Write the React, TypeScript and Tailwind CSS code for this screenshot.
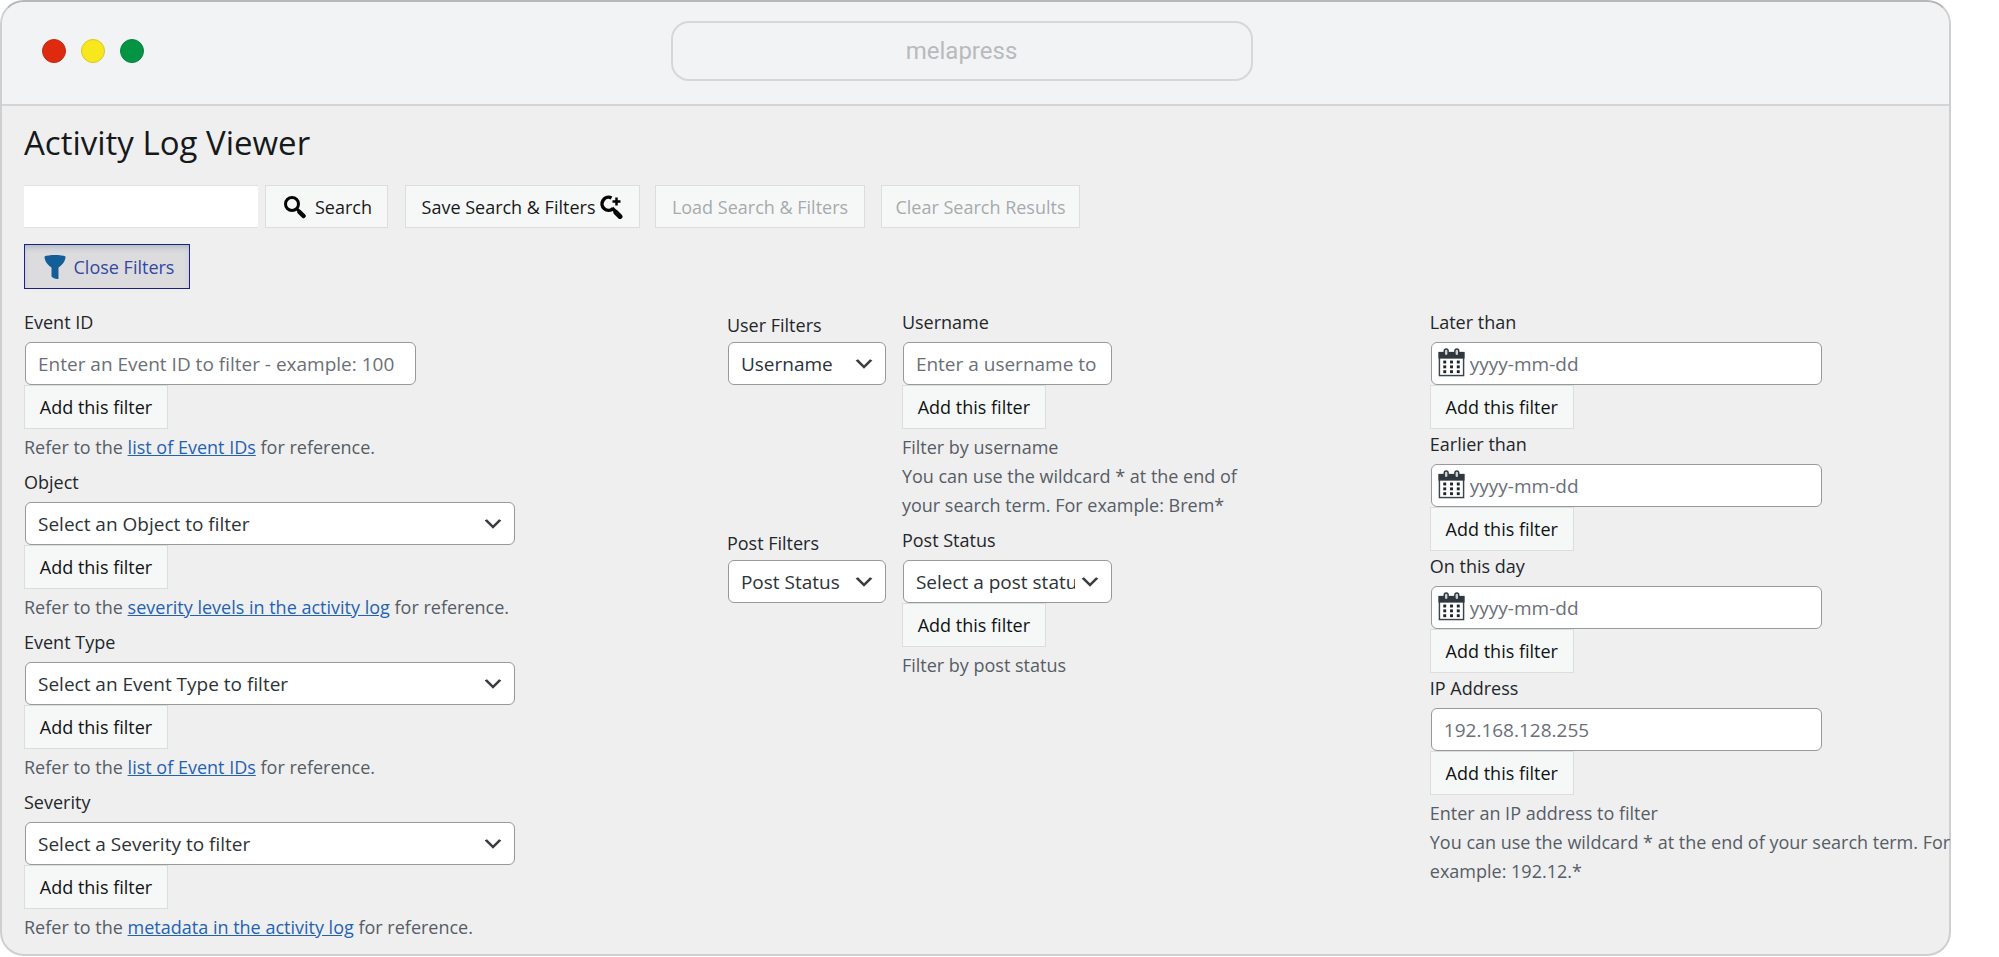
import type { ReactNode } from "react";

const controlClass =
  "h-[43px] rounded-md border border-[#96999e] bg-white px-3 text-[19px] text-[#2c3338] placeholder:text-[#6b7078] placeholder:opacity-100";

const buttonClass =
  "flex items-center whitespace-nowrap border border-[#dcdede] bg-[#f6f8f8] text-lg";

function Chevron() {
  return (
    <svg viewBox="0 0 20 20" className="pointer-events-none absolute right-2.5 top-2.5 h-6 w-6" fill="#3a3e42">
      <path d="M5 6l5 5 5-5 2 1-7 7-7-7z" />
    </svg>
  );
}

function SelectBox({ id, option, className }: { id: string; option: string; className: string }) {
  return (
    <div className={`relative ${className}`}>
      <select id={id} className={`${controlClass} block w-full appearance-none pr-9 pt-0.5`}>
        <option>{option}</option>
      </select>
      <Chevron />
    </div>
  );
}

function AddButton() {
  return (
    <button type="button" className={`${buttonClass} -ml-px h-11 w-36 justify-center text-[#101214]`}>
      Add this filter
    </button>
  );
}

function Label({ id, children }: { id: string; children: ReactNode }) {
  return (
    <label htmlFor={id} className="-ml-px mb-1.5 block text-lg leading-7 text-[#23272b]">
      {children}
    </label>
  );
}

function GroupLabel({ id, children }: { id: string; children: ReactNode }) {
  return (
    <label htmlFor={id} className="-ml-px mb-[3px] mt-[3px] block text-lg leading-7 text-[#23272b]">
      {children}
    </label>
  );
}

function Help({ children }: { children: ReactNode }) {
  return <p className="-ml-px -mr-2 mt-1 text-lg leading-[29px] text-[#565d66]">{children}</p>;
}

function Reference({ link }: { link: string }) {
  return (
    <Help>
      Refer to the{" "}
      <a href="#" className="text-[#1f63b5] underline">
        {link}
      </a>{" "}
      for reference.
    </Help>
  );
}

function CalendarIcon() {
  return (
    <svg viewBox="0 0 27 30" className="pointer-events-none absolute left-[7px] top-1.5 h-[29px] w-[27px]">
      <rect x="1" y="5" width="25" height="23.500" fill="#fff" stroke="#3c444b" strokeWidth="1.500" />
      <rect x="0" y="4" width="27" height="7" fill="#2f383f" />
      <rect x="6" y="1" width="4" height="7" rx="2" fill="#c9cdd0" stroke="#2f383f" strokeWidth="1.500" />
      <rect x="17" y="1" width="4" height="7" rx="2" fill="#c9cdd0" stroke="#2f383f" strokeWidth="1.500" />
      {[13, 18, 23].map((y) =>
        [5, 12, 19].map((x) => <rect key={`${x}-${y}`} x={x} y={y} width="3" height="3" fill="#1d2328" />),
      )}
    </svg>
  );
}

function DateFilter({ id, label }: { id: string; label: string }) {
  return (
    <div>
      <Label id={id}>{label}</Label>
      <div className="relative w-[391px]">
        <input id={id} type="text" placeholder="yyyy-mm-dd" className={`${controlClass} block w-full pl-[38px]`} />
        <CalendarIcon />
      </div>
      <AddButton />
    </div>
  );
}

const selectFilters = [
  { id: "object", label: "Object", option: "Select an Object to filter", link: "severity levels in the activity log" },
  { id: "event-type", label: "Event Type", option: "Select an Event Type to filter", link: "list of Event IDs" },
  { id: "severity", label: "Severity", option: "Select a Severity to filter", link: "metadata in the activity log" },
];

export default function App() {
  return (
    <div className="bg-white font-['Open_Sans','Noto_Sans',sans-serif]">
      <div className="mr-12 rounded-3xl border-2 border-[#cfcfcf] border-t-[#b7b7b7] bg-[#efefef]">
        <header className="relative flex h-[104px] items-center justify-center rounded-t-[22px] border-b-2 border-[#d3d5d7] bg-[#f1f3f5] pb-1 pr-7">
          <div className="absolute left-10 top-[37px] flex gap-[15px]">
            <span className="h-6 w-6 rounded-full border border-[#c32a12] bg-[#de2b0f]" />
            <span className="h-6 w-6 rounded-full border border-[#d9c81c] bg-[#f8e71c]" />
            <span className="h-6 w-6 rounded-full border border-[#088140] bg-[#049443]" />
          </div>
          <div className="flex h-[60px] w-[582px] items-center justify-center rounded-[18px] border-2 border-[#d6d7d8] bg-[#f2f3f4] font-['Roboto',sans-serif] text-2xl text-[#b9babc]">
            melapress
          </div>
        </header>

        <main className="pb-3 pl-[22px] pt-3">
          <h1 className="text-[33px] leading-[50px] text-[#16191c]">Activity Log Viewer</h1>

          <div className="mt-[17px] flex">
            <input
              aria-label="Search term"
              type="text"
              className="h-[43px] w-[234px] border-y border-[#e2e2e2] bg-white px-3 text-lg"
            />
            <button type="button" className={`${buttonClass} ml-[7px] h-[43px] w-[123px] justify-center gap-2 pl-0.5 text-[#16181a]`}>
              <svg viewBox="0 0 24 24" className="h-6 w-6" fill="none" stroke="#050505">
                <circle cx="9" cy="9" r="6.500" strokeWidth="3" />
                <path d="M13.500 13.500l2.500 2.500" strokeWidth="3" />
                <path d="M16.500 17l4 4" strokeWidth="4.500" strokeLinecap="round" />
              </svg>
              Search
            </button>
            <button type="button" className={`${buttonClass} ml-[17px] h-[43px] w-[235px] justify-center gap-1 text-[#16181a]`}>
              Save Search &amp; Filters
              <svg viewBox="0 0 24 24" className="h-6 w-6" fill="none" stroke="#050505">
                <path d="M12.500 3A6.500 6.500 0 1 0 14 13.500" strokeWidth="3.500" />
                <path d="M17.500 2.500v8M13.500 6.500h8" strokeWidth="2.500" />
                <path d="M13 13l3.500 3.500" strokeWidth="3.500" />
                <path d="M17 17.500l4 4" strokeWidth="5" strokeLinecap="round" />
              </svg>
            </button>
            <button type="button" disabled className={`${buttonClass} ml-[15px] h-[43px] w-[210px] justify-center text-[#a7aaad]`}>
              Load Search &amp; Filters
            </button>
            <button type="button" disabled className={`${buttonClass} ml-4 h-[43px] w-[199px] justify-center text-[#a7aaad]`}>
              Clear Search Results
            </button>
          </div>

          <button
            type="button"
            className="mt-4 flex h-[45px] w-[166px] items-center justify-center gap-2 border border-[#1c2280] bg-[#dcdcde] pl-1 text-lg text-[#3448a0] shadow-[inset_0_4px_6px_-2px_#a9b4bd]"
          >
            <svg viewBox="0 0 22 26" className="h-[26px] w-[22px]" fill="#135e96">
              <path d="M0.500 2.500C4 0.500 18 0.500 21.500 2.500C21.500 7 18.500 11 14.500 13.500V25C11.500 25.500 9 24 7.500 22.500V13.500C3.500 11 0.500 7 0.500 2.500z" />
            </svg>
            Close Filters
          </button>

          <div className="mt-[19px] grid grid-cols-[704fr_704fr_519fr] pl-px">
            <section className="flex flex-col gap-1.5">
              <div>
                <Label id="event-id">Event ID</Label>
                <input
                  id="event-id"
                  type="text"
                  placeholder="Enter an Event ID to filter - example: 100"
                  className={`${controlClass} block w-[391px]`}
                />
                <AddButton />
                <Reference link="list of Event IDs" />
              </div>
              {selectFilters.map((f) => (
                <div key={f.id}>
                  <Label id={f.id}>{f.label}</Label>
                  <SelectBox id={f.id} option={f.option} className="w-[490px]" />
                  <AddButton />
                  <Reference link={f.link} />
                </div>
              ))}
            </section>

            <section className="flex flex-col gap-1.5">
              <div className="flex gap-[17px]">
                <div>
                  <GroupLabel id="user-filter">User Filters</GroupLabel>
                  <SelectBox id="user-filter" option="Username" className="w-[158px]" />
                </div>
                <div className="w-[345px]">
                  <Label id="username">Username</Label>
                  <input
                    id="username"
                    type="text"
                    placeholder="Enter a username to filter"
                    className={`${controlClass} block w-[209px]`}
                  />
                  <AddButton />
                  <Help>
                    Filter by username
                    <br />
                    You can use the wildcard * at the end of your search term. For example: Brem*
                  </Help>
                </div>
              </div>
              <div className="flex gap-[17px]">
                <div>
                  <GroupLabel id="post-filter">Post Filters</GroupLabel>
                  <SelectBox id="post-filter" option="Post Status" className="w-[158px]" />
                </div>
                <div className="w-[345px]">
                  <Label id="post-status">Post Status</Label>
                  <SelectBox id="post-status" option="Select a post status" className="w-[209px]" />
                  <AddButton />
                  <Help>Filter by post status</Help>
                </div>
              </div>
            </section>

            <section className="flex flex-col gap-px">
              <DateFilter id="later-than" label="Later than" />
              <DateFilter id="earlier-than" label="Earlier than" />
              <DateFilter id="on-this-day" label="On this day" />
              <div>
                <Label id="ip-address">IP Address</Label>
                <input id="ip-address" type="text" placeholder="192.168.128.255" className={`${controlClass} block w-[391px]`} />
                <AddButton />
                <Help>
                  Enter an IP address to filter
                  <br />
                  You can use the wildcard * at the end of your search term. For example: 192.12.*
                </Help>
              </div>
            </section>
          </div>
        </main>
      </div>
    </div>
  );
}
